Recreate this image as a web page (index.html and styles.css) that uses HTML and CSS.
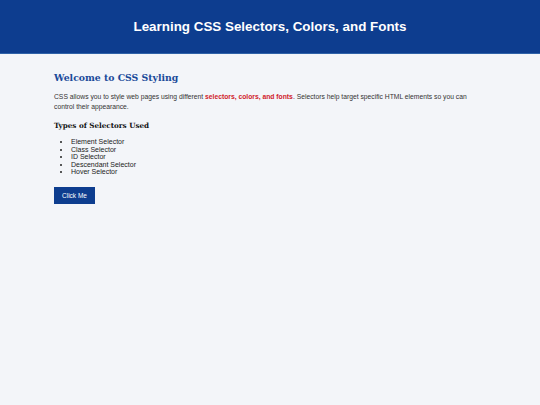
FILE: index.html
```html
<!DOCTYPE html>
<html lang="en">
<head>
<meta charset="utf-8">
<title>Learning CSS Selectors, Colors, and Fonts</title>
<link rel="stylesheet" href="styles.css">
</head>
<body>
<header class="site-header">
  <h1 class="site-title">Learning CSS Selectors, Colors, and Fonts</h1>
</header>
<main class="content">
  <h2 class="intro-title">Welcome to CSS Styling</h2>
  <p class="intro-text">CSS allows you to style web pages using different <span class="highlight">selectors, colors, and fonts</span>. Selectors help target specific HTML elements so you can control their appearance.</p>
  <h3 class="list-title">Types of Selectors Used</h3>
  <ul class="selector-list">
    <li>Element Selector</li>
    <li>Class Selector</li>
    <li>ID Selector</li>
    <li>Descendant Selector</li>
    <li>Hover Selector</li>
  </ul>
  <button class="action-btn" type="button">Click Me</button>
</main>
</body>
</html>
```
FILE: styles.css
```css
html, body {
  margin: 0;
  padding: 0;
}
body {
  background: #f3f5f9;
  font-family: "Liberation Sans", Arial, sans-serif;
  color: #333;
  min-height: 405px;
}
.site-header {
  background: #0d3d8f;
  border-bottom: 1px solid #2f62a8;
  height: 53px;
  display: flex;
  align-items: center;
  justify-content: center;
}
.site-title {
  margin: 0;
  color: #ffffff;
  font-size: 13.4px;
  font-weight: bold;
}
.content {
  padding: 17px 54px 0 54px;
}
.intro-title {
  margin: 0 0 8px 0;
  font-family: "DejaVu Serif", Georgia, serif;
  font-size: 9.3px;
  line-height: 13px;
  font-weight: bold;
  color: #1a4a9a;
}
.intro-text {
  margin: 0 0 9px 0;
  font-size: 6.75px;
  line-height: 10px;
  color: #333;
}
.highlight {
  color: #d0202a;
  font-weight: bold;
}
.list-title {
  margin: 0 0 7px 0;
  font-family: "DejaVu Serif", Georgia, serif;
  font-size: 7.2px;
  line-height: 10px;
  font-weight: bold;
  color: #111;
}
.selector-list {
  margin: 0 0 11px 0;
  padding-left: 17px;
  font-size: 7px;
  line-height: 7.5px;
  color: #222;
}
.action-btn {
  display: block;
  background: #0d3d8f;
  color: #fff;
  border: none;
  font-family: "Liberation Sans", Arial, sans-serif;
  font-size: 6.5px;
  width: 41px;
  height: 17px;
  padding: 0;
  cursor: pointer;
}
```
